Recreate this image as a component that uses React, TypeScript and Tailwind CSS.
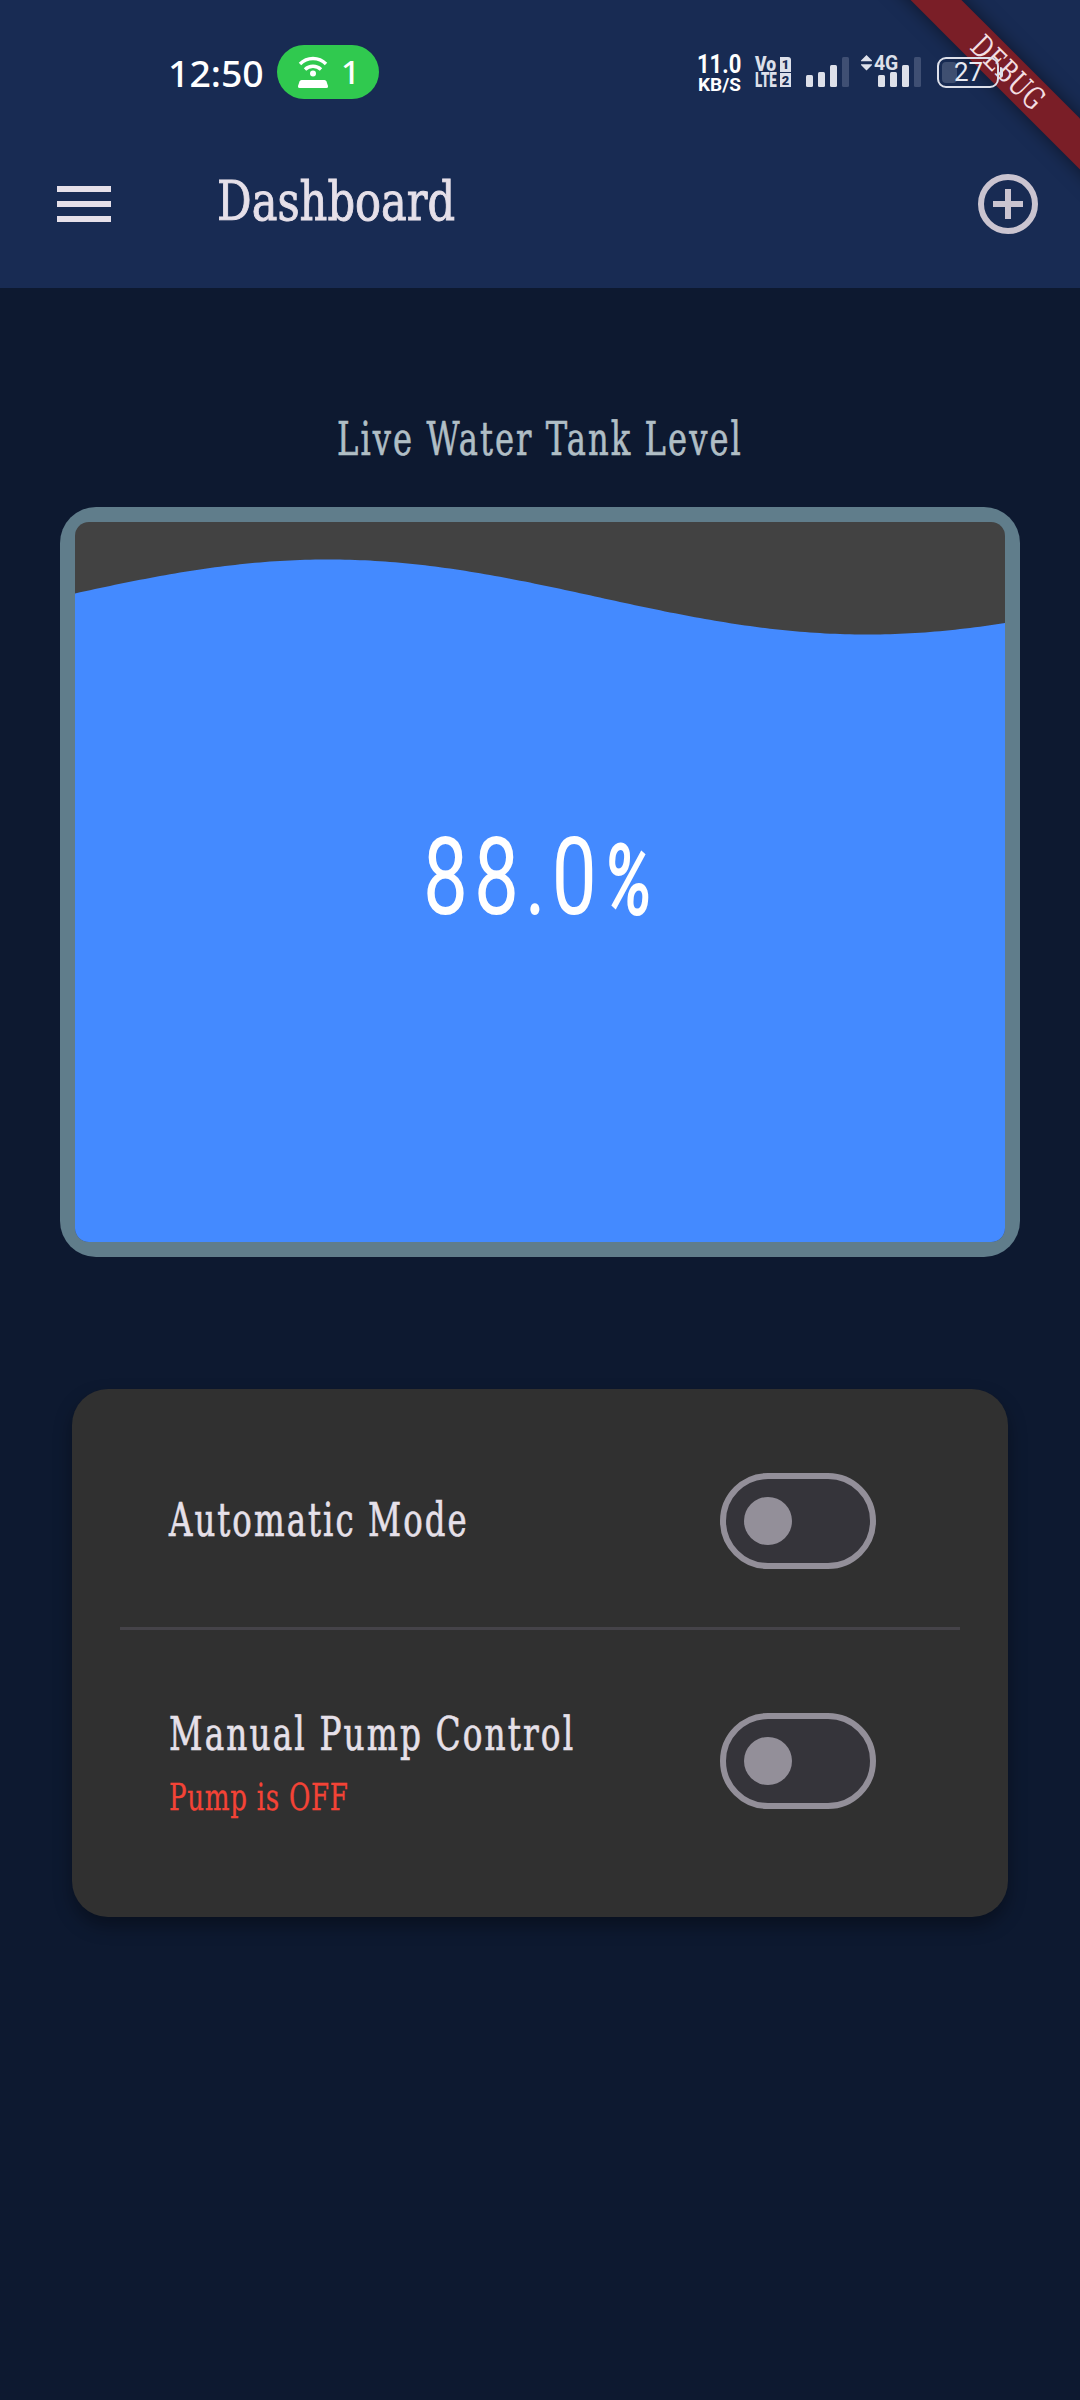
import { useLayoutEffect, useRef } from "react";
import type { ReactNode } from "react";

/** Single line of text squeezed horizontally to an exact width. */
function FitText({ width, className = "", children }: { width: number; className?: string; children: ReactNode }) {
  const ref = useRef<HTMLSpanElement>(null);
  useLayoutEffect(() => {
    const el = ref.current;
    if (el) el.style.transform = `scaleX(${width / el.offsetWidth})`;
  }, [width]);
  return (
    <span className="flex" style={{ width }}>
      <span ref={ref} className={`block shrink-0 origin-left whitespace-nowrap ${className}`}>
        {children}
      </span>
    </span>
  );
}

function Signal({ heights }: { heights: number[] }) {
  return (
    <div className="flex h-[30px] items-end gap-[5px]">
      {heights.map((h, i) => (
        <span
          key={i}
          className={`w-[7px] rounded-[1.5px] ${i === 3 ? "bg-[#3f4f73]" : "bg-[#dde0ea]"}`}
          style={{ height: h }}
        />
      ))}
    </div>
  );
}

function DebugBanner() {
  return (
    <div className="absolute top-0 right-0 h-[288px] w-[288px] overflow-hidden">
      <div className="absolute top-[53px] left-[14.5px] flex h-[36px] w-[400px] rotate-45 items-center justify-center bg-[#7a1e27] pl-[4px] shadow-[0_0_18px_rgba(0,0,0,0.5)]">
        <FitText width={90} className="font-['DejaVu_Serif',serif] text-[31px] leading-[36px] tracking-[1px] text-[#f3dfe2]">
          DEBUG
        </FitText>
      </div>
    </div>
  );
}

function StatusBar() {
  return (
    <div className="relative flex h-[120px] items-start pl-[168px] font-[Roboto,sans-serif] text-white">
      <div className="mt-[45px]">
        <FitText width={96} className="font-['Noto_Sans',sans-serif] text-[37px] leading-[55px] font-medium">12:50</FitText>
      </div>
      <div className="mt-[45px] ml-[13px] flex h-[54px] w-[102px] items-center rounded-full bg-[#30c94f] pl-[20px]">
        <svg width="32" height="34" viewBox="0 0 32 34" fill="none" className="mb-[1px]">
          <path d="M3 9a18 18 0 0 1 26 0" stroke="#fff" strokeWidth="3.4" />
          <path d="M8 14.500a11.500 11.500 0 0 1 16 0" stroke="#fff" strokeWidth="3.4" />
          <circle cx="16" cy="18.500" r="3" fill="#fff" />
          <path d="M4.500 25h23q1.500 0 2 1.500l1.500 4.500q.5 2-1.500 2H2.500q-2 0-1.500-2l1.500-4.500q.5-1.500 2-1.500z" fill="#fff" />
        </svg>
        <span className="ml-[12px] font-['Noto_Sans',sans-serif] text-[33px] leading-[54px] font-medium">1</span>
      </div>
      <div className="mt-[53px] ml-[318px] flex w-[44px] flex-col items-end">
        <FitText width={44} className="text-[25px] leading-[23px] font-bold">11.0</FitText>
        <FitText width={43} className="text-[19px] leading-[17px] font-bold">KB/S</FitText>
      </div>
      <div className="mt-[57px] ml-[14px] grid w-[36px] grid-cols-[23px_11px] gap-x-[2px] gap-y-[1px] text-[#dde0ea]">
        <FitText width={21} className="text-[20px] leading-[15px] font-black">Vo</FitText>
        <span className="flex h-[15px] items-center justify-center rounded-tr-[3px] bg-[#dde0ea] text-[13px] leading-none font-black text-[#182b53]">1</span>
        <FitText width={22} className="text-[20px] leading-[15px] font-black">LTE</FitText>
        <span className="flex h-[14px] items-center justify-center bg-[#dde0ea] text-[13px] leading-none font-black text-[#182b53]">2</span>
      </div>
      <div className="mt-[57px] ml-[15px]">
        <Signal heights={[12, 15, 22, 30]} />
      </div>
      <div className="relative mt-[57px] ml-[29px]">
        <Signal heights={[12, 15, 22, 30]} />
        <svg className="absolute top-[-2px] left-[-17px]" width="11" height="16" viewBox="0 0 11 16" fill="#dde0ea">
          <path d="M5.500 0 11 5.500V6.300H0V5.500zM0 9.200h11v.8l-5.500 5.500L0 10z" />
        </svg>
        <div className="absolute top-[-3px] left-[-4px] text-[#dde0ea]">
          <FitText width={24} className="text-[21px] leading-[18px] font-bold">4G</FitText>
        </div>
      </div>
      <div className="relative mt-[57px] ml-[16px] flex h-[31px] w-[62px] items-center justify-center rounded-[9px] border-[2.5px] border-[#dde0ea]">
        <span className="absolute top-[3px] left-[3px] h-[21px] w-[15px] rounded-[4px] bg-[#dde0ea]/20" />
        <FitText width={29} className="text-[25px] leading-[27px] text-[#e8eaf2]">27</FitText>
        <span className="absolute top-[8px] right-[-6px] h-[11px] w-[3px] rounded-r-[3px] bg-[#dde0ea]" />
      </div>
    </div>
  );
}

function Header() {
  return (
    <header className="relative h-[288px] bg-[#182b53]">
      <DebugBanner />
      <StatusBar />
      <div className="relative flex h-[168px] items-center pr-[42px] pl-[57px]">
        <button className="flex w-[54px] flex-col gap-[9px]" aria-label="Menu">
          <span className="h-[6px] bg-[#e6e0e9]" />
          <span className="h-[6px] bg-[#e6e0e9]" />
          <span className="h-[6px] bg-[#e6e0e9]" />
        </button>
        <h1 className="mb-[6px] ml-[106px] font-['DejaVu_Serif',serif] text-[#e6e0e9] [-webkit-text-stroke:1px_#e6e0e9]">
          <FitText width={238} className="text-[55px] leading-[64px]">Dashboard</FitText>
        </h1>
        <button className="ml-auto" aria-label="Add">
          <svg width="60" height="60" viewBox="0 0 60 60" fill="none" stroke="#cac4d0" strokeWidth="6" className="block">
            <circle cx="30" cy="30" r="27" />
            <path d="M30 15v30M15 30h30" />
          </svg>
        </button>
      </div>
    </header>
  );
}

const TANK_W = 930;
const TANK_H = 720;

function wavePath() {
  let d = "";
  for (let x = 0; x <= TANK_W; x += 5) {
    const y = 75 - 37.5 * Math.cos(((x - 253) / 1078) * 2 * Math.PI);
    d += `${x === 0 ? "M" : "L"}${x} ${y.toFixed(2)}`;
  }
  return `${d}V${TANK_H}H0Z`;
}

function Tank() {
  return (
    <div className="relative mx-[60px] h-[750px] overflow-hidden rounded-[36px] bg-[#607d8b] p-[15px]">
      <div className="relative h-[720px] overflow-hidden rounded-[14px] bg-[#424242]">
        <svg className="block" width={TANK_W} height={TANK_H} viewBox="0 0 930 720">
          <path d={wavePath()} fill="#448aff" />
        </svg>
        <div className="absolute top-[292px] left-[348px] flex font-[Roboto,sans-serif] leading-[128px] text-white">
          <FitText width={180} className="text-[107px] leading-[128px] font-normal tracking-[8px]">88.0</FitText>
          <div className="mt-[3px]">
            <FitText width={50} className="skew-x-[-8deg] text-[100px] leading-[128px] font-semibold italic">%</FitText>
          </div>
        </div>
      </div>
    </div>
  );
}

function Switch() {
  return (
    <button
      role="switch"
      aria-checked={false}
      className="flex h-[96px] w-[156px] items-center rounded-full border-[6px] border-[#938f99] bg-[#35343a] pl-[18px]"
    >
      <span className="h-[48px] w-[48px] rounded-full bg-[#938f99]" />
    </button>
  );
}

export default function App() {
  return (
    <div className="h-[2400px] w-[1080px] overflow-hidden bg-[#0d1930] font-['DejaVu_Serif',serif]">
      <Header />
      <main className="pt-[121px]">
        <div className="flex justify-center pb-[38px] text-[#b0bec5] [-webkit-text-stroke:0.7px_#b0bec5]">
          <FitText width={406} className="text-[47px] leading-[60px] tracking-[3px]">Live Water Tank Level</FitText>
        </div>
        <Tank />
        <section className="mx-[72px] mt-[132px] h-[528px] rounded-[36px] bg-[#303030] px-[48px] text-[#e6e0e9] shadow-[0_9px_18px_rgba(0,0,0,0.35)]">
          <div className="flex h-[238px] items-center justify-between pt-[26px] pr-[84px] pl-[49px]">
            <div className="mb-[3px] [-webkit-text-stroke:0.7px_#e6e0e9]">
              <FitText width={300} className="text-[47px] leading-[60px] tracking-[3px]">Automatic Mode</FitText>
            </div>
            <Switch />
          </div>
          <div className="h-[3px] bg-[#454349]" />
          <div className="flex items-start justify-between pt-[74px] pr-[84px] pl-[49px]">
            <div className="[-webkit-text-stroke:0.7px_#e6e0e9]">
              <FitText width={406} className="text-[47px] leading-[60px] tracking-[3px]">Manual Pump Control</FitText>
              <div className="mt-[9px] text-[#f44336] [-webkit-text-stroke:0.3px_#f44336]">
                <FitText width={180} className="text-[37px] leading-[50px] tracking-[1px]">Pump is OFF</FitText>
              </div>
            </div>
            <div className="mt-[9px]">
              <Switch />
            </div>
          </div>
        </section>
      </main>
    </div>
  );
}
